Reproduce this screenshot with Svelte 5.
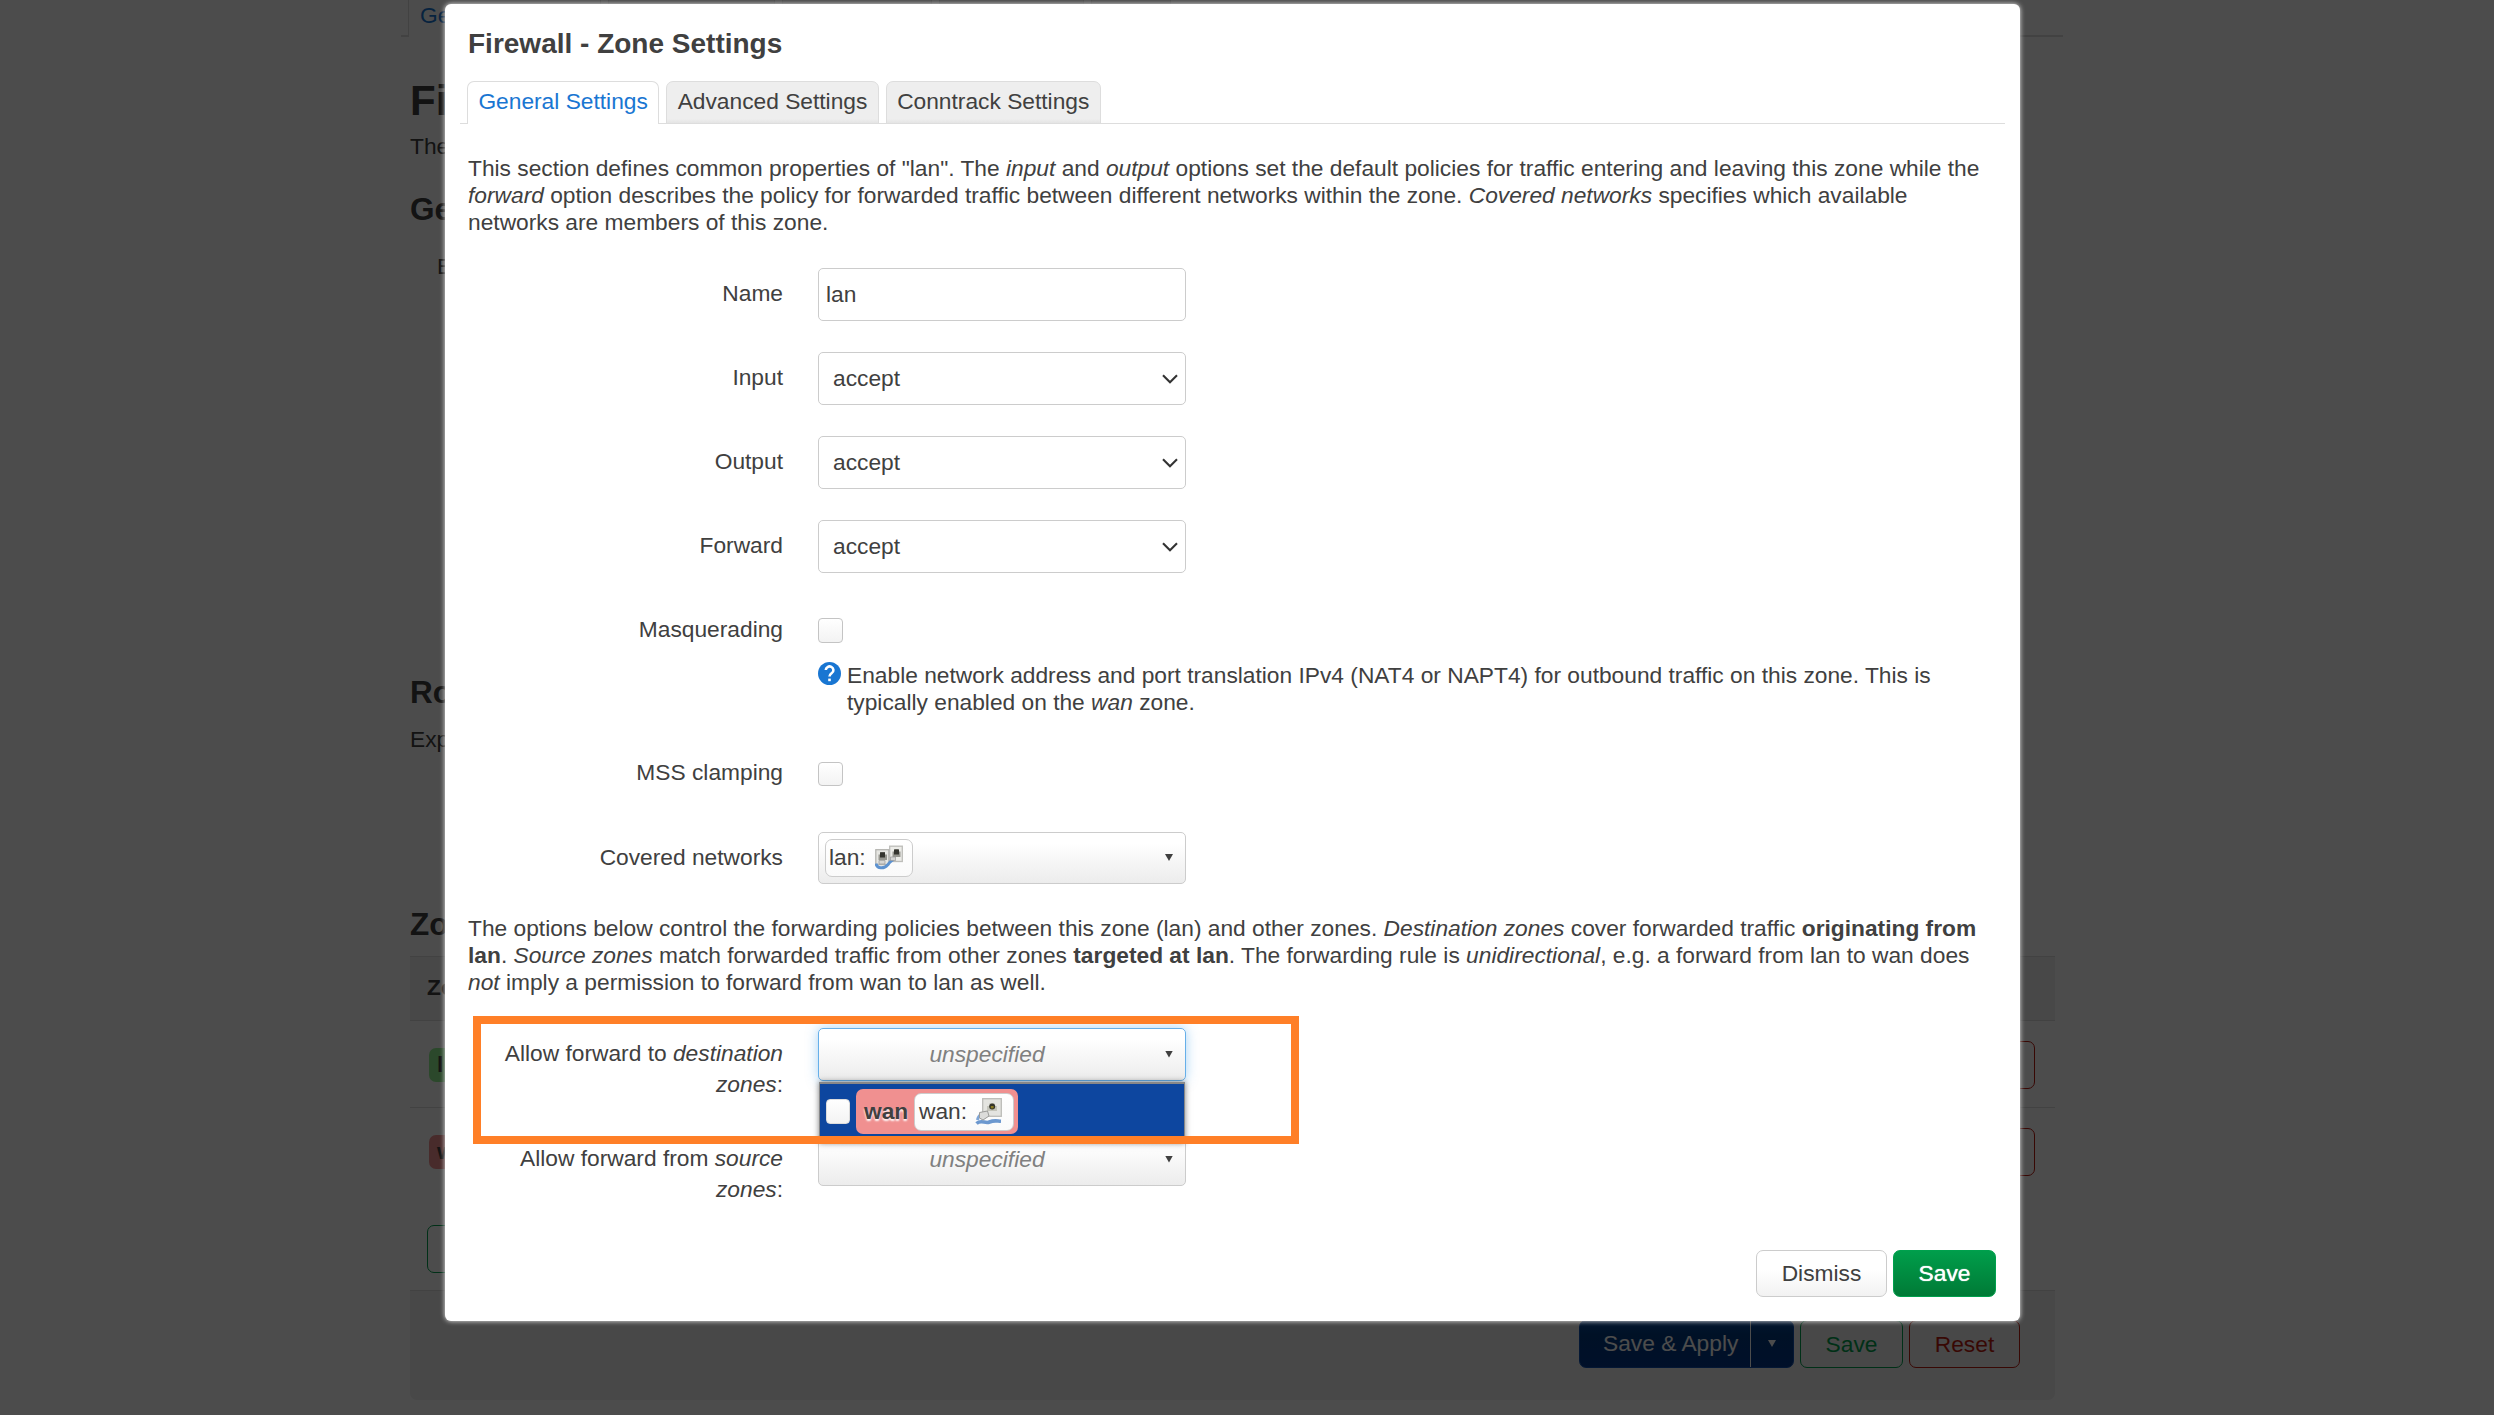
<script>
  const tabs = ['General Settings', 'Advanced Settings', 'Conntrack Settings'];
  const policies = ['Input', 'Output', 'Forward'];
  const zones = [
    { name: 'l', tone: 'green' },
    { name: 'w', tone: 'red' }
  ];
</script>

<div class="page">
  <div class="page-tabs">
    <span class="edge"></span>
    <span class="page-tab current">Ge</span>
    <span class="page-tab t2"></span>
    <span class="page-tab t3"></span>
    <span class="page-tab t4"></span>
    <span class="page-tab t5"></span>
    <span class="fill"></span>
  </div>
  <main>
    <h1>Fi</h1>
    <p class="intro">The</p>
    <h2 class="general">Ge</h2>
    <p class="syn">E</p>
    <h2 class="routing">Ro</h2>
    <p class="exp">Exp</p>
    <h2 class="zones">Zo</h2>
    <div class="thead">Zo</div>
    {#each zones as z}
      <div class="trow">
        <span class="zone {z.tone}">{z.name}</span>
        <span class="page-btn delete"></span>
      </div>
    {/each}
    <div class="add-row"><span class="page-btn add"></span></div>
    <footer>
      <span class="apply"><span class="apply-text">Save &amp; Apply</span><span class="apply-arrow"><i class="tri"></i></span></span>
      <span class="page-btn save">Save</span>
      <span class="page-btn reset">Reset</span>
    </footer>
  </main>
</div>

<div class="overlay">
  <div class="modal">
    <h4>Firewall - Zone Settings</h4>
    <div class="tabs">
      {#each tabs as tab, i}
        <span class="tab" class:active={i === 0}>{tab}</span>
      {/each}
    </div>
    <p class="descr">
      This section defines common properties of "lan". The <em>input</em> and <em>output</em> options set the default policies for traffic entering and leaving this zone while the <br /><em>forward</em> option describes the policy for forwarded traffic between different networks within the zone. <em>Covered networks</em> specifies which available <br />networks are members of this zone.
    </p>

    <div class="row first">
      <span class="label">Name</span>
      <div class="control text">lan</div>
    </div>
    {#each policies as p}
      <div class="row">
        <span class="label">{p}</span>
        <div class="control select">
          accept
          <svg class="chevron" viewBox="0 0 16 10"><path d="M1 1.3 8 8.3 15 1.3" /></svg>
        </div>
      </div>
    {/each}
    <div class="row masq">
      <span class="label">Masquerading</span>
      <div class="field">
        <span class="check"></span>
        <div class="help">
          <svg class="help-icon" viewBox="0 0 23 23">
            <circle cx="11.5" cy="11.5" r="11.5" />
            <path d="M7.8 8.1a3.8 3.6 0 1 1 6 2.9c-1.5 1.1-2.3 1.8-2.3 3.6" />
            <rect x="10.2" y="16.6" width="2.6" height="2.6" />
          </svg>
          <p>Enable network address and port translation IPv4 (NAT4 or NAPT4) for outbound traffic on this zone. This is <br />typically enabled on the <em>wan</em> zone.</p>
        </div>
      </div>
    </div>
    <div class="row mss">
      <span class="label">MSS clamping</span>
      <span class="check short"></span>
    </div>
    <div class="row covered">
      <span class="label">Covered networks</span>
      <div class="control dropdown">
        <span class="chip">
          lan:
          <svg class="net-icon" viewBox="0 0 28 26">
            <rect x="14.7" y="1.2" width="12.6" height="15.3" fill="#ecece8" stroke="#bdbdb9" stroke-width="1.3" />
            <path d="M17.5 12V6.5h2V4h4v2.500h2V12z" fill="#96968f" />
            <rect x="19" y="4.500" width="5" height="5" fill="#35352f" />
            <rect x=".8" y="4.700" width="13" height="15" fill="#e6e6e2" stroke="#b5b5b1" stroke-width="1.3" />
            <path d="M3.500 15V9.500h2V7h4.500v2.500h2V15z" fill="#96968f" />
            <rect x="5" y="7.300" width="5" height="5.200" fill="#35352f" />
            <path d="M1 18.500c1 5.500 8 5.500 11.500 1.500 2.700-3 3.200-4.500 6-5.500" fill="none" stroke="#5d92d0" stroke-width="3" />
            <path d="M4 15.500h6v3.500H4zM15.500 12h5v3.500h-5z" fill="#d5d5d3" stroke="#999" stroke-width=".7" />
          </svg>
        </span>
        <i class="tri"></i>
      </div>
    </div>

    <p class="descr second">
      The options below control the forwarding policies between this zone (lan) and other zones. <em>Destination zones</em> cover forwarded traffic <strong>originating from <br />lan</strong>. <em>Source zones</em> match forwarded traffic from other zones <strong>targeted at lan</strong>. The forwarding rule is <em>unidirectional</em>, e.g. a forward from lan to wan does <br /><em>not</em> imply a permission to forward from wan to lan as well.
    </p>

    <div class="row forward">
      <span class="label">Allow forward to <em>destination</em><br /><em>zones</em>:</span>
      <div class="control dropdown open">
        <span class="placeholder">unspecified</span>
        <i class="tri"></i>
        <div class="menu">
          <span class="check menu-check"></span>
          <span class="zone-badge">
            <strong>wan</strong>
            <span class="chip wan-chip">
              wan:
              <svg class="net-icon wan-icon" viewBox="0 0 28 28">
                <rect x="7.700" y=".7" width="18.600" height="17.600" fill="#e4e4e0" stroke="#bcbcb8" stroke-width="1.3" />
                <path d="M12 13V8h2.500V5h5v3H22v5z" fill="#c4c4ba" />
                <circle cx="17.200" cy="8.500" r="3" fill="#34342a" />
                <rect x="15.800" y="8" width="2.800" height="2.400" fill="#8a7c22" />
                <path d="M1.500 25.500c5-4.500 8.500.5 13-1.500s7-1 11.500-.8" fill="none" stroke="#6c98cf" stroke-width="3.600" />
                <path d="M2.500 22c.5-3 2-4.500 4-6" fill="none" stroke="#7ea5d6" stroke-width="3" />
                <path d="m4.500 14.500 8-1.500 1.500 5-6 4-3.500-2z" fill="#dcdcda" stroke="#9b9b99" stroke-width="1" />
              </svg>
            </span>
          </span>
        </div>
      </div>
    </div>
    <div class="row forward source">
      <span class="label">Allow forward from <em>source</em><br /><em>zones</em>:</span>
      <div class="control dropdown">
        <span class="placeholder">unspecified</span>
        <i class="tri"></i>
      </div>
    </div>

    <div class="buttons">
      <span class="btn">Dismiss</span>
      <span class="btn primary">Save</span>
    </div>
  </div>
  <div class="highlight"></div>
</div>

<style>
  :global(body) {
    margin: 0;
    background: #fff;
    overflow: hidden;
  }
  .page,
  .overlay {
    box-sizing: border-box;
    width: 2494px;
    height: 1415px;
    overflow: hidden;
    color: #404040;
    font: 22.75px/27px 'Liberation Sans', Arial, sans-serif;
  }
  .page *,
  .overlay * {
    box-sizing: border-box;
  }
  h1, h2, h4, p {
    margin: 0;
  }

  /* page behind the dialog */
  .page-tabs {
    display: flex;
    height: 37px;
    margin: 0 431px 0 401px;
  }
  .edge {
    width: 7px;
    border-bottom: 2px solid #ddd;
  }
  .page-tab {
    margin-right: 7px;
    border: solid #ddd;
    border-width: 0 1px 2px;
    background: #eee;
  }
  .page-tab.current {
    width: 193px;
    padding: 2px 0 0 11px;
    background: #fff;
    border-bottom: 0;
    color: #1976d2;
    white-space: nowrap;
  }
  .t2 { width: 167px; }
  .t3 { width: 150px; }
  .t4 { width: 145px; }
  .t5 { width: 80px; }
  .fill {
    flex: 1;
    border-bottom: 2px solid #ddd;
  }
  main {
    width: 1645px;
    margin-left: 410px;
    white-space: nowrap;
  }
  h1 {
    padding-top: 43px;
    font-size: 42px;
    line-height: 42px;
  }
  .intro { margin-top: 11px; }
  h2 {
    font-size: 31.5px;
    line-height: 36px;
  }
  .general { margin-top: 31px; }
  .syn {
    margin: 26px 0 0 27px;
  }
  .routing { margin-top: 394px; }
  .exp { margin-top: 16px; }
  .zones { margin-top: 153px; }
  .thead {
    height: 65px;
    margin-top: 14px;
    padding: 17px 17px;
    border: solid #ddd;
    border-width: 1px 0;
    background: #f0f0f0;
    font-weight: bold;
  }
  .trow {
    display: flex;
    align-items: center;
    justify-content: space-between;
    height: 87px;
    padding: 2px 20px 0 19px;
    border-bottom: 1px solid #ddd;
  }
  .trow:nth-of-type(3) {
    height: 86px;
    border-bottom: 0;
  }
  .zone {
    height: 34px;
    padding: 3px 8px;
    border-radius: 7px;
    font-weight: bold;
    width: 60px;
  }
  .green { background: #90f090; }
  .red { background: #f09090; }
  .page-btn {
    display: flex;
    align-items: center;
    justify-content: center;
    height: 48px;
    border: 1px solid;
    border-radius: 7px;
  }
  .delete { width: 110px; color: #bd1c10; }
  .add-row {
    display: flex;
    height: 96px;
    padding: 31px 0 0 17px;
  }
  .add { width: 100px; color: #00a04d; }
  footer {
    display: flex;
    justify-content: flex-end;
    gap: 6px;
    height: 110px;
    padding: 29px 35px 0 0;
    border-top: 1px solid #ddd;
    border-radius: 0 0 7px 7px;
    background: #f0f0f0;
  }
  .apply {
    display: flex;
    width: 215px;
    height: 48px;
    border: 1px solid #0f4fb0;
    border-radius: 7px;
    background: linear-gradient(#0c4b9d, #00397f 30%, #04378c);
    color: #fff;
  }
  .apply-text {
    width: 171px;
    padding: 9px 0 0 23px;
    border-right: 1px solid #fff;
  }
  .apply-arrow { padding: 19px 0 0 17px; }
  .save { width: 103px; color: #00a04d; }
  .reset { width: 111px; color: #bd1c10; }
  .tri {
    display: block;
    width: 8px;
    height: 7px;
    background: currentColor;
    clip-path: polygon(0 0, 100% 0, 50% 100%);
  }

  /* dialog */
  .overlay {
    position: absolute;
    inset: 0;
    padding: 4px 0 0 445px;
    background: rgba(0, 0, 0, 0.7);
  }
  .modal {
    display: flex;
    flex-direction: column;
    width: 1575px;
    height: 1317px;
    padding: 23px 24px 24px 23px;
    border-radius: 6px;
    background: #fff;
    box-shadow: 0 0 5px #eee;
  }
  h4 {
    font-size: 28px;
    line-height: 33px;
  }
  .tabs {
    display: flex;
    gap: 7px;
    height: 43px;
    margin: 21px -9px 0 -8px;
    padding-left: 7px;
    background: linear-gradient(#ddd, #ddd) bottom / 100% 1px no-repeat;
  }
  .tab {
    padding: 6px 10.4px 0;
    border: 1px solid #ddd;
    border-radius: 7px 7px 0 0;
    background: linear-gradient(#eee 90%, #e4e4e4);
    white-space: nowrap;
  }
  .tab.active {
    border-bottom: 0;
    background: #fff;
    color: #1976d2;
  }
  .descr {
    margin-top: 31px;
    white-space: nowrap;
  }
  .row {
    display: flex;
    height: 53px;
    margin-top: 31px;
  }
  .row.first { margin-top: 32px; }
  .label {
    flex: none;
    width: 315px;
    margin-right: 35px;
    padding-top: 12px;
    text-align: right;
  }
  .control {
    position: relative;
    display: flex;
    align-items: center;
    width: 368px;
    height: 53px;
    border: 1px solid #ccc;
    border-radius: 5px;
  }
  .text { padding: 0 0 1px 7px; }
  .select {
    justify-content: space-between;
    padding: 0 7px 0 14px;
  }
  .chevron {
    width: 16px;
    height: 10px;
    fill: none;
    stroke: #333;
    stroke-width: 2.1;
  }
  .masq {
    height: 112px;
  }
  .check {
    display: block;
    width: 25px;
    height: 25px;
    margin-top: 14px;
    border: 1px solid #c4c4c4;
    border-radius: 4px;
    background: linear-gradient(#fff, #f3f3f3);
  }
  .help {
    display: flex;
    margin-top: 19px;
    white-space: nowrap;
  }
  .help p { margin: 0 0 0 6px; }
  .help-icon {
    width: 23px;
    height: 23px;
    fill: #1976d2;
  }
  .help-icon path {
    fill: none;
    stroke: #fff;
    stroke-width: 2.6;
  }
  .help-icon rect { fill: #fff; }
  .check.short { height: 24px; }
  .mss { margin-top: 32px; }
  .mss .label { padding-top: 11px; }
  .covered .control {
    height: 52px;
    padding-left: 6px;
  }
  .dropdown {
    justify-content: space-between;
    padding: 0 12px 1px 0;
    background: linear-gradient(#fff, #fff 20%, #ececec);
  }
  .chip {
    display: flex;
    align-items: center;
    height: 38px;
    padding: 0 9px 0 3px;
    border: 1px solid #ccc;
    border-radius: 7px;
    background: linear-gradient(#fff, #fafafa);
  }
  .net-icon {
    width: 28px;
    height: 26px;
    margin: 1px 0 0 9px;
  }
  .second { margin-top: 30px; }
  .forward {
    height: 74px;
    margin-top: 31px;
  }
  .second + .forward { margin-top: 32px; }
  .forward .label {
    padding-top: 10px;
    line-height: 31px;
  }
  .placeholder {
    flex: 1;
    margin: 0 11px 0 1px;
    color: #808080;
    font-style: italic;
    text-align: center;
  }
  .open {
    border-color: #66afe9;
    box-shadow: 0 0 12px rgba(82, 168, 236, 0.5);
  }
  .menu {
    position: absolute;
    top: 53px;
    left: 0;
    z-index: 2;
    display: flex;
    align-items: center;
    width: 366px;
    height: 61px;
    padding: 0 0 3px 7px;
    border: 1px solid #888;
    border-top-width: 2px;
    background: #0d469f;
    box-shadow: 0 0 6px rgba(0, 0, 0, 0.5);
  }
  .menu .menu-check {
    width: 24px;
    height: 25px;
    margin: 0 6px 0 -1px;
    border-color: #ddd;
  }
  .zone-badge {
    display: flex;
    align-items: center;
    width: 162px;
    height: 45px;
    padding: 0 4px 0 8px;
    border-radius: 7px;
    background: #f09090;
    justify-content: space-between;
  }
  .zone-badge strong {
    text-shadow: 0 2px 2px #fff;
  }
  .wan-chip {
    width: 100px;
    padding: 0 9px 1px 4px;
  }
  .wan-icon {
    height: 28px;
    margin-left: 8px;
  }
  .buttons {
    display: flex;
    justify-content: flex-end;
    gap: 6px;
    margin-top: auto;
  }
  .btn {
    display: flex;
    align-items: center;
    justify-content: center;
    width: 131px;
    height: 47px;
    border: 1px solid #ccc;
    border-radius: 7px;
    background: linear-gradient(#fff 40%, #f2f2f2);
  }
  .btn.primary {
    width: 103px;
    border-color: #00a04d;
    background: linear-gradient(#009e4b, #007a36);
    color: #fff;
    text-shadow: 0 0 1px #fff;
  }
  .highlight {
    position: absolute;
    top: 1016px;
    left: 473px;
    z-index: 3;
    width: 826px;
    height: 128px;
    border: 8px solid #ff7f27;
  }
</style>
